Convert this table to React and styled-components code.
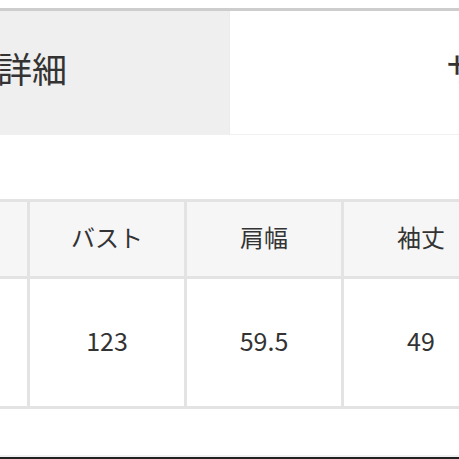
import React from "react";
import styled, { createGlobalStyle } from "styled-components";

const Global = createGlobalStyle`
  html, body { margin: 0; padding: 0; background: #fff; }
  body {
    font-family: "Noto Sans CJK JP", "Noto Sans", sans-serif;
    color: #333;
    overflow: hidden;
  }
`;

const Page = styled.div`
  width: 459px;
  height: 459px;
  overflow: hidden;
  display: flex;
  flex-direction: column;
  padding-top: 8px;
  box-sizing: border-box;
`;

const TabBar = styled.div`
  display: flex;
  border-top: 3px solid #cdcdcd;
  height: 124px;
  flex-shrink: 0;
`;

const Tab = styled.div`
  flex: 0 0 ${(p) => p.$w}px;
  background: ${(p) => (p.$active ? "#efefef" : "#fff")};
  border-left: ${(p) => (p.$active ? "none" : "1px solid #ececec")};
  border-bottom: 1px solid #f0f0f0;
  display: flex;
  align-items: center;
  padding-left: ${(p) => p.$pad}px;
  padding-bottom: 10px;
  box-sizing: border-box;
  overflow: hidden;
  white-space: nowrap;
  font-size: 35px;
  color: #333;
`;

const TabLabel = styled.span`
  margin-left: ${(p) => p.$shift || 0}px;
`;

const TableWrap = styled.div`
  margin-top: 64px;
  margin-left: -130px;
  display: grid;
  grid-template-columns: repeat(4, 154px);
  gap: 3px;
  padding: 3px;
  background: #e3e3e3;
  width: max-content;
`;

const Cell = styled.div`
  background: ${(p) => (p.$head ? "#f6f6f6" : "#fff")};
  height: ${(p) => (p.$head ? 74 : 127)}px;
  display: flex;
  align-items: center;
  justify-content: center;
  padding-bottom: ${(p) => (p.$head ? 5 : 6)}px;
  box-sizing: border-box;
  font-size: ${(p) => (p.$head ? 24 : 25)}px;
  color: #333;
`;

const Footer = styled.div`
  margin-top: auto;
  height: 4px;
  box-sizing: border-box;
  border-top: 2px solid #f1f1f1;
  background: #222;
  flex-shrink: 0;
`;

const heads = ["サイズ", "バスト", "肩幅", "袖丈"];
const vals = ["F", "123", "59.5", "49"];

export default function App() {
  return (
    <>
      <Global />
      <Page>
        <TabBar>
          <Tab $active $w={229} $pad={0}>
            <TabLabel $shift={-3}>詳細</TabLabel>
          </Tab>
          <Tab $w={230} $pad={216}>
            <TabLabel>サイズ</TabLabel>
          </Tab>
        </TabBar>
        <TableWrap>
          {heads.map((h) => (
            <Cell key={h} $head>{h}</Cell>
          ))}
          {vals.map((v) => (
            <Cell key={v}>{v}</Cell>
          ))}
        </TableWrap>
        <Footer />
      </Page>
    </>
  );
}
